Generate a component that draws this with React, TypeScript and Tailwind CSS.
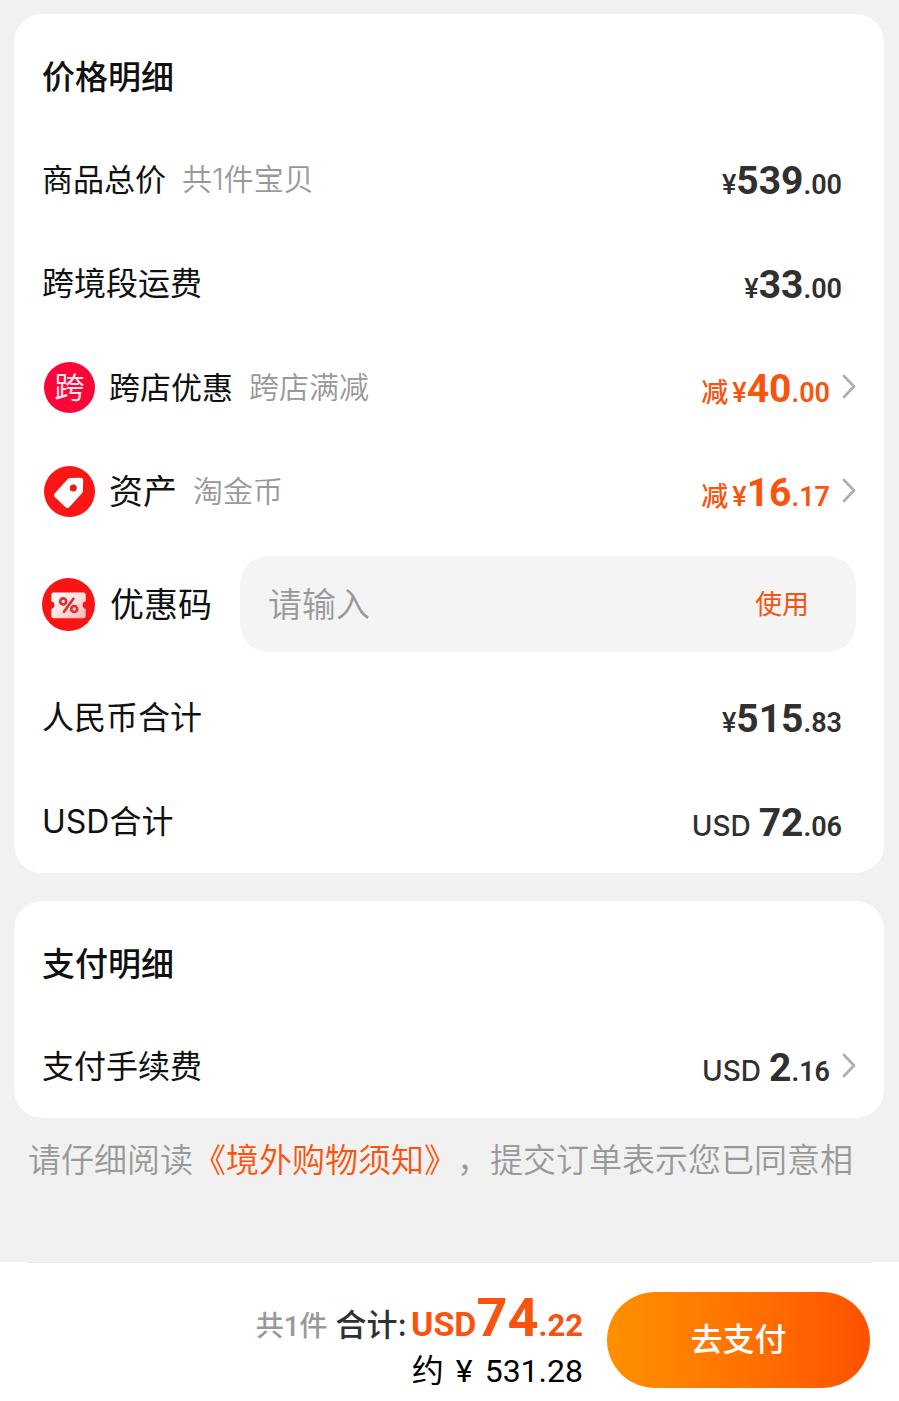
import { useState } from 'react';
import type { ReactNode } from 'react';

interface AmountProps { prefix?: string; symbol: string; whole: string; cents: string; highlight?: boolean; }

function Amount({ prefix, symbol, whole, cents, highlight }: AmountProps) {
  const isYen = symbol === '¥';
  return (
    <span className={`flex items-baseline font-bold leading-none font-[Roboto,'Noto_Sans_CJK_SC',sans-serif] ${highlight ? 'text-[#f8540f]' : 'text-[#303030]'}`}>
      {prefix && <span className="text-[27px] font-medium mr-1">{prefix}</span>}
      <span className={isYen ? 'text-[27px] font-medium' : 'text-[28px] font-medium mr-2 font-[Inter,sans-serif]'}>{symbol}</span>
      <span className="text-[39px]">{whole}</span>
      <span className="text-[27px] font-semibold">.{cents}</span>
    </span>
  );
}

function Chevron() {
  return (
    <svg className="w-[14px] h-[26px] ml-3 shrink-0" viewBox="0 0 14 26" fill="none" stroke="#b0b0b0" strokeWidth="2.8" strokeLinecap="round" strokeLinejoin="round">
      <path d="M2 2 12 12.5 2 23" />
    </svg>
  );
}

function TagIcon() {
  return (
    <svg className="w-[51px] h-[51px] shrink-0" viewBox="0 0 51 51">
      <circle cx="25.5" cy="25.5" r="25.5" fill="#fb1616" />
      <path d="M26.5 12 36.3 11.7Q39.2 11.7 39.2 14.5L38.9 25Q38.8 26.5 37.8 27.6L25.2 41.2Q23.4 42.9 21.6 41.3L10.7 31Q8.9 29.2 10.6 27.4L23.6 13.2Q24.8 12 26.5 12Z" fill="#fff" />
      <circle cx="29.3" cy="22" r="3.5" fill="#e81c1c" />
    </svg>
  );
}

function CouponIcon() {
  return (
    <svg className="w-[53px] h-[53px] shrink-0" viewBox="0 0 53 53">
      <defs>
        <linearGradient id="ticket" x1="0" y1="0" x2="1" y2="1">
          <stop offset="0" stopColor="#fff" />
          <stop offset="0.5" stopColor="#ffe3e1" />
          <stop offset="1" stopColor="#ffb5b3" />
        </linearGradient>
      </defs>
      <circle cx="26.5" cy="26.5" r="26.5" fill="#fb1414" />
      <path d="M11.5 14.5H41.5Q43.7 14.5 43.7 16.7V23.2A4 4 0 0 0 43.7 31V38Q43.7 40.2 41.5 40.2H11.5Q9.3 40.2 9.3 38V31A4 4 0 0 0 9.3 23.2V16.7Q9.3 14.5 11.5 14.5Z" fill="url(#ticket)" />
      <g fill="none" stroke="#df3030" strokeWidth="2.7" strokeLinecap="round">
        <circle cx="21.2" cy="23.4" r="3" />
        <circle cx="32.2" cy="31" r="3" />
        <path d="M31.4 20.8 22 33.8" />
      </g>
    </svg>
  );
}

function CrossStoreIcon() {
  return (
    <span className="w-[51px] h-[51px] shrink-0 rounded-full bg-[#fb0638] text-[#ffe6ee] text-[30px] leading-none flex items-center justify-center">
      跨
    </span>
  );
}

interface RowProps { icon?: ReactNode; label: string; note?: string; amount: AmountProps; link?: boolean; }

function Row({ icon, label, note, amount, link }: RowProps) {
  const size = label.length === 2 ? 'text-[34px]' : label.length === 4 ? 'text-[31px]' : 'text-[32px]';
  const content = (
    <>
      {icon && <span className="ml-[2px] mr-[14px]">{icon}</span>}
      <span className={`pt-[2px] ${size}`}>{label}</span>
      {note && <span className="ml-4 pt-[2px] text-[30px] font-[350] text-[#999]">{note}</span>}
      <span className={`ml-auto pt-1 ${link ? '' : 'pr-[14px]'}`}><Amount {...amount} /></span>
      {link && <Chevron />}
    </>
  );
  const cls = 'w-full h-[104px] flex items-center text-left text-[#111]';
  return link ? <button type="button" className={cls}>{content}</button> : <div className={cls}>{content}</div>;
}

function Card({ title, children }: { title: string; children: ReactNode }) {
  return (
    <section className="bg-white rounded-[28px] px-7 pt-[13px]">
      <h2 className="h-[100px] pt-[2px] flex items-center text-[33px] font-medium text-[#111]">{title}</h2>
      {children}
    </section>
  );
}

export default function App() {
  const [code, setCode] = useState('');

  return (
    <div className="min-h-screen flex flex-col bg-[#f1f1f1] leading-tight font-[Inter,'Noto_Sans_CJK_SC',sans-serif]">
      <main className="pl-[14px] pr-[15px] pt-[14px] flex flex-col gap-7">
        <Card title="价格明细">
          <Row label="商品总价" note="共1件宝贝" amount={{ symbol: '¥', whole: '539', cents: '00' }} />
          <Row label="跨境段运费" amount={{ symbol: '¥', whole: '33', cents: '00' }} />
          <Row link icon={<CrossStoreIcon />} label="跨店优惠" note="跨店满减" amount={{ prefix: '减', symbol: '¥', whole: '40', cents: '00', highlight: true }} />
          <Row link icon={<TagIcon />} label="资产" note="淘金币" amount={{ prefix: '减', symbol: '¥', whole: '16', cents: '17', highlight: true }} />

          {/* Coupon code */}
          <form className="h-[122px] flex items-center" onSubmit={(e) => e.preventDefault()}>
            <CouponIcon />
            <label htmlFor="coupon" className="ml-[15px] mr-7 pt-[2px] text-[34px] text-[#111] shrink-0">优惠码</label>
            <div className="flex-1 min-w-0 h-24 rounded-[28px] bg-[#f4f4f4] flex items-center pl-7 pr-[47px]">
              <input id="coupon" value={code} onChange={(e) => setCode(e.target.value)} placeholder="请输入" className="flex-1 min-w-0 bg-transparent outline-none pt-[2px] text-[34px] font-[350] text-[#111] placeholder:text-[#999]" />
              <button type="submit" className="pt-[2px] text-[27px] text-[#f8540f]">使用</button>
            </div>
          </form>

          <Row label="人民币合计" amount={{ symbol: '¥', whole: '515', cents: '83' }} />
          <Row label="USD合计" amount={{ symbol: 'USD', whole: '72', cents: '06' }} />
        </Card>

        <Card title="支付明细">
          <Row link label="支付手续费" amount={{ symbol: 'USD', whole: '2', cents: '16' }} />
        </Card>
      </main>

      <p className="pt-[18px] pl-7 text-[33px] leading-[48px] font-[350] text-[#999] whitespace-nowrap overflow-hidden [text-spacing-trim:space-all]">
        请仔细阅读<a href="#notice" className="text-[#f8540f]">《境外购物须知》</a>，提交订单表示您已同意相
      </p>

      <footer className="mt-auto bg-white">
        <div className="mx-7 h-px bg-[#e9e9e9]" />
        <div className="h-[138px] pl-7 pr-[29px] pt-4 flex items-center justify-end gap-6">
          <div className="flex flex-col items-end gap-1 pt-1">
            <div className="flex items-baseline leading-none">
              <span className="text-[28px] font-medium text-[#999] font-[Roboto,'Noto_Sans_CJK_SC',sans-serif]">共1件</span>
              <span className="ml-2 text-[31px] font-medium text-[#303030]">合计:</span>
              <span className="ml-1 flex items-baseline font-bold text-[#f8540f] font-[Roboto,sans-serif]">
                <span className="text-[34px]">USD</span>
                <span className="text-[54px]">74</span>
                <span className="text-[31px]">.22</span>
              </span>
            </div>
            <div className="flex gap-3 text-[32px] leading-[44px] text-black font-[Roboto,'Noto_Sans_CJK_SC',sans-serif]">
              <span>约</span>
              <span>¥</span>
              <span>531.28</span>
            </div>
          </div>
          <button type="button" className="w-[263px] h-24 shrink-0 rounded-full bg-linear-to-r from-[#ff9000] to-[#ff5000] text-[32px] font-medium text-white">去支付</button>
        </div>
      </footer>
    </div>
  );
}
